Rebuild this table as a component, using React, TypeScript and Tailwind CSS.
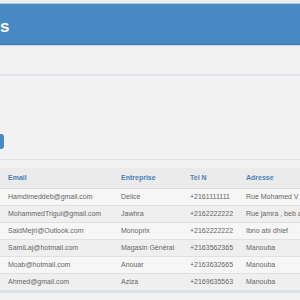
const rows = [
  { email: "Hamdimeddeb@gmail.com", entreprise: "Delice", tel: "+2161111111", adresse: "Rue Mohamed V" },
  { email: "MohammedTrigui@gmail.com", entreprise: "Jawhra", tel: "+2162222222", adresse: "Rue jamra , beb aliwa" },
  { email: "SaidMejri@Outlook.com", entreprise: "Monoprix", tel: "+2162222222", adresse: "Ibno abi dhief" },
  { email: "SamiLaj@hotmail.com", entreprise: "Magasin Général", tel: "+2163562365", adresse: "Manouba" },
  { email: "Moab@hotmail.com", entreprise: "Anouar", tel: "+2163632665", adresse: "Manouba" },
  { email: "Ahmed@gmail.com", entreprise: "Aziza", tel: "+2169635563", adresse: "Manouba" },
];

const cols = "grid grid-cols-[113px_69px_56px_62px]";
const cell = "pl-2 whitespace-nowrap overflow-hidden";

export default function App() {
  return (
    <div className="w-[300px] h-[300px] overflow-hidden bg-[#f2f2f2] font-['Liberation_Sans',Arial,sans-serif]">
      <div className="h-[3px] bg-[#e9eef2] border-b border-[#b7c8d7] box-content" />
      <header className="h-[41px] bg-[#4888c3] border-b border-[#3f79b1] flex items-center pt-[5px]">
        <h1 className="text-white font-bold text-[17px] leading-none">s</h1>
      </header>
      <div className="h-[1px] bg-[#c8dcee]" />
      <div className="h-[30px] border-b-2 border-[#e0e6eb]" />
      <div className="pt-[58px]">
        <div className="w-[4px] h-[15px] bg-[#4a89c4] rounded-r-[3px]" />
      </div>
      <div className="h-[11px] border-b border-[#e2e4e6]" />
      <div className="pt-[8px]">
        <div className={`${cols} h-[21px] items-center bg-[#ebebeb] border-b border-[#dcdcdc] text-[7px] font-bold text-[#4c80b6]`}>
          <div className={cell}>Email</div>
          <div className={cell}>Entreprise</div>
          <div className={cell}>Tel N</div>
          <div className={cell}>Adresse</div>
        </div>
        {rows.map((r, i) => (
          <div
            key={i}
            className={`${cols} h-[17px] items-center border-b border-[#e0e0e0] text-[7px] text-[#666] ${
              i % 2 === 0 ? "bg-[#f6f6f6]" : "bg-[#efefef]"
            }`}
          >
            <div className={cell}>{r.email}</div>
            <div className={cell}>{r.entreprise}</div>
            <div className={cell}>{r.tel}</div>
            <div className={cell}>{r.adresse}</div>
          </div>
        ))}
        <div className="h-[2px] bg-[#d4e2ee]" />
      </div>
    </div>
  );
}
